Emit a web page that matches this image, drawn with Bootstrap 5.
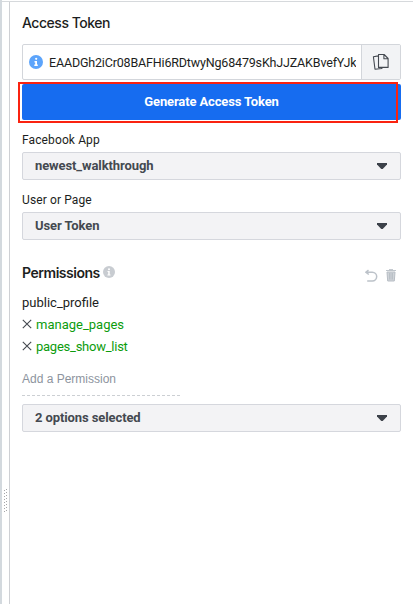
<!DOCTYPE html>
<html lang="en">
<head>
<meta charset="utf-8">
<meta name="viewport" content="width=device-width, initial-scale=1">
<title>Access Token</title>
<link href="https://cdn.jsdelivr.net/npm/bootstrap@5.3.0/dist/css/bootstrap.min.css" rel="stylesheet">
<style>
body{font-family:Roboto,"Liberation Sans",sans-serif;font-size:13px;line-height:18px;color:#1c1e21;background:#fff;height:604px;overflow:hidden}
.shell{height:604px}
.edge{width:2px;background:#d3d9de}
.main-area{border-top:1px solid #d6d9dc;margin-top:1px;min-width:0}
.splitter{width:7px}
.panel{border-left:1px solid #ced0d4;padding:0 12px 0 12px;min-width:0}
.title{font-family:Inter,sans-serif;font-size:14px;line-height:20px;font-weight:600;margin:0;letter-spacing:-.47px}
.token-title{padding-top:11px;height:42px;font-weight:500}
.token-box{height:36px;border:1px solid #d3d6db;border-radius:2px;overflow:hidden;margin-bottom:4px}
.token-value{font-size:12.5px;letter-spacing:-.17px;width:307px;padding-top:1px}
.copy-btn{width:39px;background:#f2f3f5;border:0;border-left:1px solid #d3d6db;color:#444950}
.generate{height:36px;border-radius:2px;background:#166cf0;border:0;font-size:13px;font-weight:700;letter-spacing:-.14px}
.highlight{left:-4px;top:-2px;width:380px;height:41px;border:2px solid #fa2310;pointer-events:none}
.field-label{font-size:12px;line-height:16px;height:20px;letter-spacing:.12px}
.picker{height:28px;border:1px solid #d5d7dd;border-radius:2px;background:#f3f3f5;color:#444950;font-weight:700;padding:0 13px 0 12px;font-size:13px;letter-spacing:-.1px}
.permissions-head{height:20px;margin-top:23px}
.granted{color:#0d9c0d}
.perm{height:22px}
.perm span{padding-top:1px}
.show-list{letter-spacing:-.25px}
.add-label{font-family:"Liberation Sans",sans-serif;color:#8d949e;font-size:12px;margin-top:13px;height:25px}
.dash{width:158px;height:1px;background:repeating-linear-gradient(90deg,#cccfd3 0 3px,transparent 3px 5px)}
svg{display:block;flex:none}
</style>
</head>
<body>
<div class="shell d-flex">
  <div class="edge"></div>
  <div class="main-area d-flex flex-grow-1">
    <div class="splitter d-flex align-items-center">
      <svg width="7" height="420" viewBox="0 -395 7 420" fill="#a4a5a8"><path d="M4 1h1v1H4zM4 4h1v1H4zM4 7h1v1H4zM4 10h1v1H4zM4 13h1v1H4zM4 16h1v1H4zM4 19h1v1H4zM4 22h1v1H4zM2 2h1v1H2zM2 5h1v1H2zM2 8h1v1H2zM2 11h1v1H2zM2 14h1v1H2zM2 17h1v1H2zM2 20h1v1H2zM2 23h1v1H2z"/></svg>
    </div>
    <div class="panel flex-grow-1">
      <h2 class="title token-title">Access Token</h2>
      <div class="token-box d-flex">
        <div class="d-flex align-items-center flex-grow-1 overflow-hidden">
          <svg class="ms-1" width="18" height="16" viewBox="-2 0 18 16"><circle cx="7" cy="8" r="7" fill="#5ca4fb"/><circle cx="7.2" cy="4.8" r="1.1" fill="#fff"/><path d="M5.5 7h2.5v3.5h.8V12H5.3v-1.5h.9V8.4h-.7z" fill="#fff"/></svg>
          <div class="token-value text-nowrap overflow-hidden ms-1">EAADGh2iCr08BAFHi6RDtwyNg68479sKhJJZAKBvefYJk</div>
        </div>
        <button class="copy-btn d-flex align-items-center justify-content-center p-0 flex-shrink-0" aria-label="Copy token">
          <svg width="18" height="18" viewBox="0 0 18 18" fill="none" stroke="currentColor" stroke-width="1.1" stroke-linejoin="round"><path d="M6.5 1.5h5.6l4 4v8.9H6.5zM11.9 1.5v4.2h4.2M6.3 2.9 1.4 3.7 3 16.3l6.8-.8.3-1"/></svg>
        </button>
      </div>
      <div class="position-relative">
        <button class="generate btn btn-primary w-100 p-0">Generate Access Token</button>
        <div class="highlight position-absolute"></div>
      </div>
      <div class="field-label mt-2 pt-1"><span>Facebook App</span></div>
      <div class="picker d-flex align-items-center justify-content-between mt-1"><span>newest_walkthrough</span><svg width="11" height="6" viewBox="0 0 11 6"><path d="M1 0h10v1.5L6.7 6H5.3L1 1.5z" fill="#3c4149"/></svg></div>
      <div class="field-label mt-2 pt-1"><span>User or Page</span></div>
      <div class="picker d-flex align-items-center justify-content-between mt-1"><span>User Token</span><svg width="11" height="6" viewBox="0 0 11 6"><path d="M1 0h10v1.5L6.7 6H5.3L1 1.5z" fill="#3c4149"/></svg></div>
      <div class="permissions-head d-flex align-items-center">
        <h2 class="title">Permissions</h2>
        <svg class="ms-1" width="12" height="12" viewBox="1 1 12 12" overflow="visible"><circle cx="6" cy="6" r="6" fill="#c8ccd1"/><circle cx="6" cy="3.2" r="1" fill="#fff"/><path d="M4.5 5h2.2v3.5h.8v1H4.4v-1h.8V6h-.7z" fill="#fff"/></svg>
        <div class="d-flex ms-auto align-items-center pe-1 pt-1">
          <svg width="13" height="13" viewBox="0 -1 13 13" fill="none" stroke="#bcc2c9" stroke-width="1.5"><path d="M3.5.1.9 2.2 3.8 4.5M1.3 2.2h6a4.4 4.4 0 0 1 0 8.8H2.2"/></svg>
          <svg class="ms-2" width="11" height="13" viewBox=".5 0 11 13" overflow="visible"><path d="M1.5 3h8l-.7 9H2.2z" fill="#d0d4d9" stroke="#b8bec5"/><path d="M0.5 1.5h10M3.5.6h4M4 4v6.5M5.5 4v6.5M7 4v6.5" stroke="#b8bec5" stroke-width=".9"/></svg>
        </div>
      </div>
      <div class="perm d-flex align-items-center mt-2"><span>public_profile</span></div>
      <div class="perm d-flex align-items-center"><svg width="10" height="10" viewBox="0 0 10 10" stroke="#444950" stroke-width="1.1"><path d="M.8.8l8.4 8.4M9.2.8.8 9.2"/></svg><span class="granted ms-1">manage_pages</span></div>
      <div class="perm d-flex align-items-center"><svg width="10" height="10" viewBox="0 0 10 10" stroke="#444950" stroke-width="1.1"><path d="M.8.8l8.4 8.4M9.2.8.8 9.2"/></svg><span class="granted show-list ms-1">pages_show_list</span></div>
      <div class="add-label">Add a Permission</div>
      <div class="dash"></div>
      <div class="picker d-flex align-items-center justify-content-between mt-2"><span>2 options selected</span><svg width="11" height="6" viewBox="0 0 11 6"><path d="M1 0h10v1.5L6.7 6H5.3L1 1.5z" fill="#3c4149"/></svg></div>
    </div>
  </div>
</div>
<script src="https://cdn.jsdelivr.net/npm/bootstrap@5.3.0/dist/js/bootstrap.bundle.min.js"></script>
</body>
</html>
